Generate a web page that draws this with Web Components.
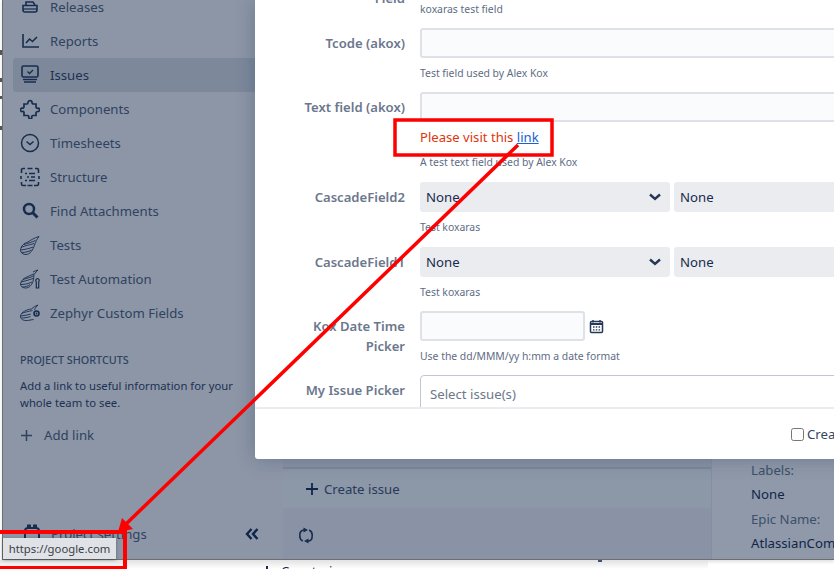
<!DOCTYPE html>
<html>
<head>
<meta charset="utf-8">
<title>Create issue</title>
<style>
  html, body { margin: 0; padding: 0; background: #fff; overflow: hidden; }
  body { font-family: "Noto Sans", "Open Sans", sans-serif; }
</style>
</head>
<body>
<app-shell></app-shell>

<script>
const WING = '<path d="M19 1.500C14 3 11 5 8 7 4 8 1 11 .5 15c0 3 2.500 4.500 5.500 4.500 4 0 7-4.500 8.500-9.500 1-3 2.500-6 4.500-8.500z"/><path d="M4 9.500c3-1 7-2 11.500-4M1 12.500c4-2 9-2.500 13-4M.8 15c4.200-.5 8.700-1.500 12.200-3M2 17.500c3 0 7-1 9.500-2.500"/>';
const WING_SMALL = '<path d="M14 5C11 6 9 7 7 8 4 9 1 11.500 .5 15c0 2.500 2.500 4 5 4 3.500 0 6-2.500 7.500-6.500 .5-2.500 1-5 1-7.500z"/><path d="M13 3c1.500-.8 3-1.500 5-2-1.500 1-2.500 2.500-3.500 4M3 10.500c3-1 7-2 10.500-3.500M1 13c4-1 8-2 12-3.500M1 15.500c4 0 8-1 11-2.500M2.500 18c3 0 5.500-1 7.500-2.500"/>';

const ICONS = {
  releases: '<path d="M6 8V5h7l2 3" fill="none" stroke="currentColor" stroke-width="1.6"/><path d="M3 8.500h14v4.500a2 2 0 0 1-2 2H5a2 2 0 0 1-2-2z" fill="none" stroke="currentColor" stroke-width="1.600"/><path d="M3 12h14" stroke="currentColor" stroke-width="1.200"/>',
  reports: '<path d="M3 3v13h16" fill="none" stroke="currentColor" stroke-width="1.600"/><path d="M6 12l3.500-4 3 2.500L17 6" fill="none" stroke="currentColor" stroke-width="1.600"/>',
  issues: '<rect x="2" y="1" width="16" height="11" rx="1.500" fill="none" stroke="currentColor" stroke-width="1.600"/><path d="M7.500 6.500l2 2 3.500-3.500" fill="none" stroke="currentColor" stroke-width="1.300"/><path d="M3 14.500h14M4 17h12" stroke="currentColor" stroke-width="1.400"/>',
  components: '<path d="M8 3.500c0-2.500 4-2.500 4 0 0 1 1 1.500 2 1.500h2v3c0 1 1 1.500 1.800 1.200 2-.7 2.500 3.300 0 3.300-.8 0-1.800.5-1.800 1.500v2.500h-3c-1 0-1.500 1-1.200 1.800.5 2-3.500 2-3 0 .2-.8-.2-1.800-1.200-1.800H4v-3c0-1-1-1.300-1.800-1-2 .7-2.500-3.500 0-3.300 1 .1 1.800-.5 1.800-1.500V5h3c.6 0 1-.6 1-1.500z" fill="none" stroke="currentColor" stroke-width="1.700"/>',
  timesheets: '<circle cx="10" cy="10" r="8.500" fill="none" stroke="currentColor" stroke-width="1.500"/><path d="M6.500 8.500l3.500 3 3.500-3" fill="none" stroke="currentColor" stroke-width="1.500"/>',
  structure: '<path d="M5 1.500H3a1.500 1.500 0 0 0-1.500 1.500v3M1 9v3M1.500 15v2a1.500 1.500 0 0 0 1.500 1.500h3M15 1.500h2a1.500 1.500 0 0 1 1.500 1.500v3M19 9v3M18.500 15v2a1.500 1.500 0 0 1-1.500 1.500h-3M7.500 1.500h5M7.500 18.500h5" fill="none" stroke="currentColor" stroke-width="1.600"/><path d="M5 6.500h2M9 6.500h6M7 10h2M11 10h4M5 13.500h2M9 13.500h6" stroke="currentColor" stroke-width="1.600"/>',
  find: '<circle cx="9" cy="8" r="5" fill="none" stroke="currentColor" stroke-width="2.500"/><path d="M13 12l4.500 4.500" stroke="currentColor" stroke-width="3"/>',
  wing: `<g fill="none" stroke="currentColor" stroke-width=".9">${WING}</g>`,
  wingTool: `<g fill="none" stroke="currentColor" stroke-width=".9">${WING_SMALL}<path d="M17.500 9.500a2 2 0 0 1 1.200 3.300V19h-2.400v-6.200a2 2 0 0 1 1.200-3.300z" stroke-width="1.200"/></g>`,
  wingGear: `<g fill="none" stroke="currentColor" stroke-width=".9"><path d="M.5 13c1-4 6-6.500 11-7 2-2 4-3 6.500-4-1.500 1.500-3 3-3.500 5M.5 13c-.3 3 3 5 7 4.500l6-1"/><path d="M1.500 10.500c3-1.500 7-2 11-3M.8 13c3.500-.5 7-1 10-2M1.500 15c3 0 6-.5 9-1.500"/><circle cx="16.500" cy="10.500" r="2.500" stroke-width="1.600"/></g><circle cx="16.500" cy="10.500" r=".9" fill="currentColor"/>`,
  gear: '<path d="M6 4V1.500h2V4h4V1.500h2V4a3 3 0 0 1 3 3v7a3 3 0 0 1-3 3H6a3 3 0 0 1-3-3V7a3 3 0 0 1 3-3z" fill="none" stroke="currentColor" stroke-width="2"/>'
};

function icon(name, size = 20) {
  return `<svg width="${size}" height="${size}" viewBox="0 0 20 20" aria-hidden="true">${ICONS[name]}</svg>`;
}

class NavItem extends HTMLElement {
  constructor() {
    super();
    this.attachShadow({mode: 'open'});
    const name = this.getAttribute('icon');
    this.shadowRoot.innerHTML = `
      <style>
        :host { display: flex; align-items: center; height: 34px; margin-left: 10px; padding-left: 7px; gap: 10px; border-radius: 3px 0 0 3px; color: #526079; font-size: 13.200px; }
        :host([active]) { background: #dfe1e6; }
        :host([active]) span { color: #33415e; }
        svg { flex: none; color: #253858; }
        span { white-space: nowrap; }
      </style>
      ${icon(name)}
      <span><slot></slot></span>
    `;
  }
}

class SideNav extends HTMLElement {
  constructor() {
    super();
    this.attachShadow({mode: 'open'});
    this.shadowRoot.innerHTML = `
      <style>
        :host { display: flex; flex-direction: column; height: 100%; box-sizing: border-box; color: #526079; background: #f9fafb; overflow: hidden; }
        .items { margin-top: -10px; }
        h4 { margin: 23px 0 0 17px; font-size: 10.800px; line-height: 14px; font-weight: 500; color: #526079; text-transform: uppercase; }
        p { margin: 10px 0 0 17px; width: 225px; font-size: 11.300px; line-height: 17px; color: #33415e; }
        .add { display: flex; align-items: center; margin: 15px 0 0 18px; gap: 12px; font-size: 13.200px; color: #526079; }
        .foot { display: flex; align-items: center; margin-top: auto; height: 50px; padding: 0 24px 0 19px; gap: 9px; font-size: 13.200px; color: #526079; }
        .foot svg { color: #253858; }
        .foot .push { margin-left: auto; color: #172b4d; }
      </style>
      <div class="items"><slot></slot></div>
      <h4>Project shortcuts</h4>
      <p>Add a link to useful information for your whole team to see.</p>
      <div class="add">
        <svg width="11" height="11" viewBox="0 0 11 11"><path d="M5.500 0v11M0 5.500h11" stroke="currentColor" stroke-width="1.500"/></svg>
        <span>Add link</span>
      </div>
      <div class="foot">
        ${icon('gear')}
        <span>Project settings</span>
        <svg class="push" width="14" height="12" viewBox="0 0 14 12"><path d="M6.500 1L2 6l4.500 5M12.500 1L8 6l4.500 5" fill="none" stroke="currentColor" stroke-width="2.400"/></svg>
      </div>
    `;
  }
}

class FormField extends HTMLElement {
  constructor() {
    super();
    this.attachShadow({mode: 'open'});
    this.shadowRoot.innerHTML = `
      <style>
        :host { display: grid; grid-template-columns: 150px 1fr; column-gap: 15px; }
        .label { text-align: right; font-size: 13.100px; line-height: 20px; font-weight: 600; color: #6b778c; padding: var(--label-top, 5px) 0 0 38px; }
        .desc { display: block; font-size: 10.400px; line-height: 14px; margin-top: 8px; color: #5e6c84; white-space: nowrap; }
        ::slotted([slot=extra]) { display: block; }
      </style>
      <div class="label">${this.getAttribute('label') || ''}</div>
      <div>
        <slot></slot>
        <slot name="extra"></slot>
        <span class="desc">${this.getAttribute('desc') || ''}</span>
      </div>
    `;
  }
}

class TextBox extends HTMLElement {
  constructor() {
    super();
    this.attachShadow({mode: 'open'});
    this.shadowRoot.innerHTML = `
      <style>
        :host { display: block; box-sizing: border-box; height: 30px; border: 2px solid #dfe1e6; border-radius: 3px; background: #fafbfc; }
        :host([short]) { width: 165px; }
      </style>
    `;
  }
}

class CascadeSelect extends HTMLElement {
  constructor() {
    super();
    this.attachShadow({mode: 'open'});
    this.shadowRoot.innerHTML = `
      <style>
        :host { display: flex; gap: 4px; }
        .sel { display: flex; align-items: center; justify-content: space-between; flex: none; width: 250px; height: 30px; box-sizing: border-box; padding: 0 6px; background: #ebecf0; border-radius: 3px; font-size: 13.200px; color: #172b4d; }
        svg { color: #253858; margin-right: 3px; }
      </style>
      <div class="sel"><span>None</span><svg width="12" height="8" viewBox="0 0 12 8"><path d="M1 1.500l5 4.500 5-4.500" fill="none" stroke="currentColor" stroke-width="2.400"/></svg></div>
      <div class="sel"><span>None</span></div>
    `;
  }
}

class CreateDialog extends HTMLElement {
  constructor() {
    super();
    this.attachShadow({mode: 'open'});
    this.shadowRoot.innerHTML = `
      <style>
        :host { position: absolute; left: 255px; top: 0; width: 640px; height: 459px; display: flex; flex-direction: column; background: #fff; border-radius: 0 0 3px 3px; box-shadow: 0 0 20px rgba(9,30,66,.25); }
        .body { flex: 1; min-height: 0; overflow: hidden; border-bottom: 2px solid #ebecf0; }
        .scroll { display: flex; flex-direction: column; margin-top: -28px; }
        .foot { flex: none; height: 50px; display: flex; align-items: center; padding: 0 0 0 536px; box-sizing: border-box; font-size: 13.200px; color: #344563; gap: 3px; white-space: nowrap; }
        .check { width: 13px; height: 13px; border: 1px solid #767676; border-radius: 2.500px; box-sizing: border-box; background: #fff; flex: none; }
      </style>
      <div class="body"><div class="scroll"><slot></slot></div></div>
      <div class="foot"><span class="check"></span><span>Create another</span></div>
    `;
  }
}

class CrossBar extends HTMLElement {
  constructor() {
    super();
    this.attachShadow({mode: 'open'});
    this.shadowRoot.innerHTML = `
      <style>
        :host { position: absolute; inset: 0; z-index: 10; pointer-events: none; }
        svg { position: absolute; left: 0; top: 0; }
      </style>
      <svg width="834" height="569" viewBox="0 0 834 569">
        <rect x="395" y="120" width="157" height="35" fill="none" stroke="#fe0000" stroke-width="3.500"/>
        <rect x="-5" y="532" width="130" height="36" fill="none" stroke="#fe0000" stroke-width="4"/>
        <path d="M518 145L125 525" stroke="#fe0000" stroke-width="3.500" fill="none"/>
        <path d="M118 532L122 518L133 529z" fill="#fe0000"/>
      </svg>
    `;
  }
}

class MainPanel extends HTMLElement {
  constructor() {
    super();
    this.attachShadow({mode: 'open'});
    this.shadowRoot.innerHTML = `
      <style>
        :host { display: grid; grid-template-columns: 1fr 122px; min-width: 0; color: #172b4d; font-size: 13.200px; background: #f4f5f7; }
        .left { position: relative; display: flex; flex-direction: column; justify-content: flex-end; border-right: 1px solid #ebecf0; }
        .create { display: flex; align-items: center; gap: 6px; height: 39px; padding-left: 23px; margin-bottom: 51px; background: #fafbfc; border-top: 2px solid #dfe1e6; color: #42526e; }
        .create svg { color: #172b4d; }
        .refresh { position: absolute; left: 15px; bottom: 15px; color: #253858; }
        .right { background: #fff; display: flex; flex-direction: column; justify-content: flex-end; padding: 0 0 3.500px 39px; white-space: nowrap; line-height: 24.500px; }
        .right .k { color: #6b778c; }
      </style>
      <div class="left">
        <div class="create">
          <svg width="12" height="12" viewBox="0 0 12 12"><path d="M6 0v12M0 6h12" stroke="currentColor" stroke-width="1.800"/></svg>
          <span>Create issue</span>
        </div>
        <svg class="refresh" width="16" height="17" viewBox="0 0 16 17"><path d="M6.500 3H6C3.500 3 1.800 5 1.800 8v1c0 2.500 1 4 3 5M9.500 14h.5c2.500 0 4.200-2 4.200-5V8c0-2.500-1-4-3-5" fill="none" stroke="currentColor" stroke-width="1.600"/><path d="M5.500 .5l4.500 2.500-4.500 2.500zM10.500 16.500L6 14l4.500-2.500z" fill="currentColor"/></svg>
      </div>
      <div class="right">
        <span class="k">Labels:</span>
        <span>None</span>
        <span class="k">Epic Name:</span>
        <span>AtlassianCom</span>
      </div>
    `;
  }
}

class AppShell extends HTMLElement {
  constructor() {
    super();
    this.attachShadow({mode: 'open'});
    this.shadowRoot.innerHTML = `
      <style>
        :host { display: block; position: relative; width: 834px; height: 569px; overflow: hidden; background: #fff; font-family: "Noto Sans", "Open Sans", sans-serif; }
        .page { display: flex; flex-direction: column; height: 100%; }
        .window { position: relative; flex: none; height: 560px; margin-left: 2px; display: grid; grid-template-columns: 280px 1fr; border-left: 1px solid #6e6e6e; border-bottom: 1px solid #6e6e6e; box-sizing: border-box; box-shadow: 0 2px 3px rgba(0,0,0,.12); }
        .blanket { position: absolute; inset: 0; background: rgba(9,30,66,.455); }
        .behind { position: relative; flex: 1; font-size: 13.200px; line-height: 20px; color: #172b4d; background: linear-gradient(#e2e2e2, #fff) no-repeat 0 0 / 708px 100%; overflow: hidden; }
        .behind span { position: absolute; left: 281px; top: 1px; }
        .behind i { position: absolute; left: 266px; top: 6px; width: 2px; height: 4px; background: #172b4d; }
        .behind b { position: absolute; left: 598px; top: 0; width: 4px; height: 2px; background: #42526e; }
        .strip { position: absolute; left: 0; top: 0; }
        .tip { position: absolute; left: 3px; top: 538px; width: 113px; height: 21px; box-sizing: border-box; display: flex; align-items: center; justify-content: center; background: #dfe3e8; font-size: 11.300px; color: #3c4043; box-shadow: 0 1px 3px rgba(0,0,0,.35); }
      </style>
      <div class="page">
        <div class="window">
          <side-nav>
            <nav-item icon="releases">Releases</nav-item>
            <nav-item icon="reports">Reports</nav-item>
            <nav-item icon="issues" active>Issues</nav-item>
            <nav-item icon="components">Components</nav-item>
            <nav-item icon="timesheets">Timesheets</nav-item>
            <nav-item icon="structure">Structure</nav-item>
            <nav-item icon="find">Find Attachments</nav-item>
            <nav-item icon="wing">Tests</nav-item>
            <nav-item icon="wingTool">Test Automation</nav-item>
            <nav-item icon="wingGear">Zephyr Custom Fields</nav-item>
          </side-nav>
          <main-panel></main-panel>
          <div class="blanket"></div>
        </div>
        <div class="behind"><i></i><b></b><span>Constrains</span></div>
      </div>
      <svg class="strip" width="2" height="140"><path d="M0 50h2v5H0zM0 78h2v4H0zM0 96h2v3H0zM0 126h2v4H0z" fill="#555"/></svg>
      <create-dialog>
        <form-field label="Field" desc="koxaras test field" style="height:50px;--label-top:16px"><div style="height:22px"></div></form-field>
        <form-field label="Tcode (akox)" desc="Test field used by Alex Kox" style="margin-top:6px"><text-box></text-box></form-field>
        <form-field label="Text field (akox)" desc="A test text field used by Alex Kox" style="margin-top:12px">
          <text-box></text-box>
          <div slot="extra" style="font-size:13.100px;line-height:20px;margin-top:5px;color:#de350b">Please visit this <a href="https://google.com" style="color:#1a5fd8">link</a></div>
        </form-field>
        <form-field label="CascadeField2" desc="Test koxaras" style="margin-top:13px"><cascade-select></cascade-select></form-field>
        <form-field label="CascadeField1" desc="Test koxaras" style="margin-top:13px"><cascade-select></cascade-select></form-field>
        <form-field label="Kox Date Time Picker" desc="Use the dd/MMM/yy h:mm a date format" style="margin-top:12px">
          <div style="display:flex;align-items:center;gap:4px">
            <text-box short style="flex:none"></text-box>
            <svg width="15" height="15" viewBox="0 0 15 15" style="color:#253858"><rect x="1.500" y="2.500" width="12" height="11" rx="1" fill="none" stroke="currentColor" stroke-width="1.500"/><path d="M1.500 5h12" stroke="currentColor" stroke-width="2"/><path d="M4 1v2.500M11 1v2.500" stroke="currentColor" stroke-width="1.500"/><path d="M4 8h1.500M6.800 8h1.500M9.600 8h1.500M4 10.800h1.500M6.800 10.800h1.500M9.600 10.800h1.500" stroke="currentColor" stroke-width="1.300"/></svg>
          </div>
        </form-field>
        <form-field label="My Issue Picker" style="margin-top:12px">
          <div style="box-sizing:border-box;height:50px;border:1px solid #c1c7d0;border-radius:4px;padding:9px;font-size:13.200px;color:#6b778c">Select issue(s)</div>
        </form-field>
      </create-dialog>
      <div class="tip">https://google.com</div>
      <cross-bar></cross-bar>
    `;
  }
}

customElements.define('nav-item', NavItem);
customElements.define('side-nav', SideNav);
customElements.define('form-field', FormField);
customElements.define('text-box', TextBox);
customElements.define('cascade-select', CascadeSelect);
customElements.define('create-dialog', CreateDialog);
customElements.define('cross-bar', CrossBar);
customElements.define('main-panel', MainPanel);
customElements.define('app-shell', AppShell);
</script>
</body>
</html>
